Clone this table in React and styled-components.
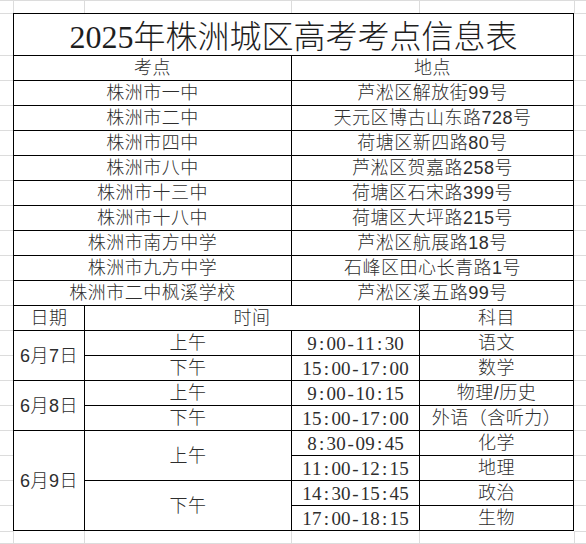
import { Fragment } from "react";
import styled, { createGlobalStyle } from "styled-components";

const GlobalStyle = createGlobalStyle`
  html, body {
    margin: 0;
    padding: 0;
    background: #fff;
  }
  body {
    font-family: "Liberation Sans", "Noto Sans CJK SC", sans-serif;
  }
`;

const GRID = "#dcdcdc";
const INK = "#2e2e2e";

// spreadsheet columns A..F and rows 1..23; the bordered range covers B..E, rows 2..21
const Sheet = styled.div`
  display: grid;
  grid-template-columns: 13px 71px 207px 128px 155px 12px;
  grid-template-rows: 13px 42px repeat(18, 25px) 26px 12px 1px;
  width: 586px;
  height: 544px;
  overflow: hidden;
  background: #fff;
`;

// empty spreadsheet cell around the bordered range
const BlankCell = styled.div`
  grid-column: ${p => p.$col};
  grid-row: ${p => p.$row};
  box-sizing: border-box;
  border-left: ${p => (p.$noLeft ? "none" : `1px solid ${GRID}`)};
  border-top: ${p => (p.$noTop ? "none" : `1px solid ${GRID}`)};
`;

const Table = styled.div`
  grid-column: 2 / 6;
  grid-row: 2 / 22;
  box-sizing: border-box;
  display: grid;
  grid-template-columns: 71px 207px 128px 154px;
  grid-template-rows: 42px repeat(19, 25px);
  border-right: 1px solid #000;
  border-bottom: 1px solid #000;
  background: #fff;
`;

const Cell = styled.div`
  grid-column: ${p => p.$col};
  grid-row: ${p => p.$row};
  box-sizing: border-box;
  border-left: 1px solid #000;
  border-top: 1px solid #000;
  display: flex;
  align-items: center;
  justify-content: center;
  font-size: 18px;
  line-height: 1;
  letter-spacing: 0.5px;
  font-weight: 300;
  color: ${INK};
  white-space: nowrap;
`;

const TitleCell = styled(Cell)`
  font-family: "Liberation Serif", "Noto Sans CJK SC", serif;
  font-size: 32px;
  letter-spacing: 0;
  padding-top: 4px;
  color: #1e1e1e;
`;

const ClockCell = styled(Cell)`
  font-family: "Liberation Serif", "Noto Sans CJK SC", serif;
  font-size: 19px;
  font-weight: 400;
  letter-spacing: 0;
`;

const Ch = styled.span`
  display: inline-block;
  width: 9.7px;
  text-align: center;
`;

const schools = [
  ["株洲市一中", "芦淞区解放街99号"],
  ["株洲市二中", "天元区博古山东路728号"],
  ["株洲市四中", "荷塘区新四路80号"],
  ["株洲市八中", "芦淞区贺嘉路258号"],
  ["株洲市十三中", "荷塘区石宋路399号"],
  ["株洲市十八中", "荷塘区大坪路215号"],
  ["株洲市南方中学", "芦淞区航展路18号"],
  ["株洲市九方中学", "石峰区田心长青路1号"],
  ["株洲市二中枫溪学校", "芦淞区溪五路99号"],
];

const exams = [
  ["9:00-11:30", "语文"],
  ["15:00-17:00", "数学"],
  ["9:00-10:15", "物理/历史"],
  ["15:00-17:00", "外语（含听力）"],
  ["8:30-09:45", "化学"],
  ["11:00-12:15", "地理"],
  ["14:30-15:45", "政治"],
  ["17:00-18:15", "生物"],
];

const days = [
  { label: "6月7日", row: "13 / 15", halves: [["上午", "13"], ["下午", "14"]] },
  { label: "6月8日", row: "15 / 17", halves: [["上午", "15"], ["下午", "16"]] },
  { label: "6月9日", row: "17 / 21", halves: [["上午", "17 / 19"], ["下午", "19 / 21"]] },
];

const Clock = ({ text }) => (
  <>
    {text.split("").map((c, i) => (
      <Ch key={i}>{c}</Ch>
    ))}
  </>
);

const margins = [];
for (let r = 1; r <= 23; r++) {
  for (let c = 1; c <= 6; c++) {
    const body = r >= 2 && r <= 21;
    if (body && c >= 2 && c <= 5) continue;
    margins.push({
      r,
      c,
      noLeft: c === 1 || (c === 6 && body),
      noTop: r === 22 && c >= 2 && c <= 5,
    });
  }
}

export default function App() {
  return (
    <>
      <GlobalStyle />
      <Sheet>
        {margins.map(m => (
          <BlankCell key={`${m.r}-${m.c}`} $row={m.r} $col={m.c} $noLeft={m.noLeft} $noTop={m.noTop} />
        ))}
        <Table>
          <TitleCell $col="1 / 5" $row="1">2025年株洲城区高考考点信息表</TitleCell>
          <Cell $col="1 / 3" $row="2">考点</Cell>
          <Cell $col="3 / 5" $row="2">地点</Cell>
          {schools.map(([name, addr], i) => (
            <Fragment key={name}>
              <Cell $col="1 / 3" $row={3 + i}>{name}</Cell>
              <Cell $col="3 / 5" $row={3 + i}>{addr}</Cell>
            </Fragment>
          ))}
          <Cell $col="1" $row="12">日期</Cell>
          <Cell $col="2 / 4" $row="12">时间</Cell>
          <Cell $col="4" $row="12">科目</Cell>
          {days.map(d => (
            <Fragment key={d.label}>
              <Cell $col="1" $row={d.row}>{d.label}</Cell>
              {d.halves.map(([h, row]) => (
                <Cell key={h} $col="2" $row={row}>{h}</Cell>
              ))}
            </Fragment>
          ))}
          {exams.map(([time, subject], i) => (
            <Fragment key={i}>
              <ClockCell $col="3" $row={13 + i}>
                <Clock text={time} />
              </ClockCell>
              <Cell $col="4" $row={13 + i}>{subject}</Cell>
            </Fragment>
          ))}
        </Table>
      </Sheet>
    </>
  );
}
